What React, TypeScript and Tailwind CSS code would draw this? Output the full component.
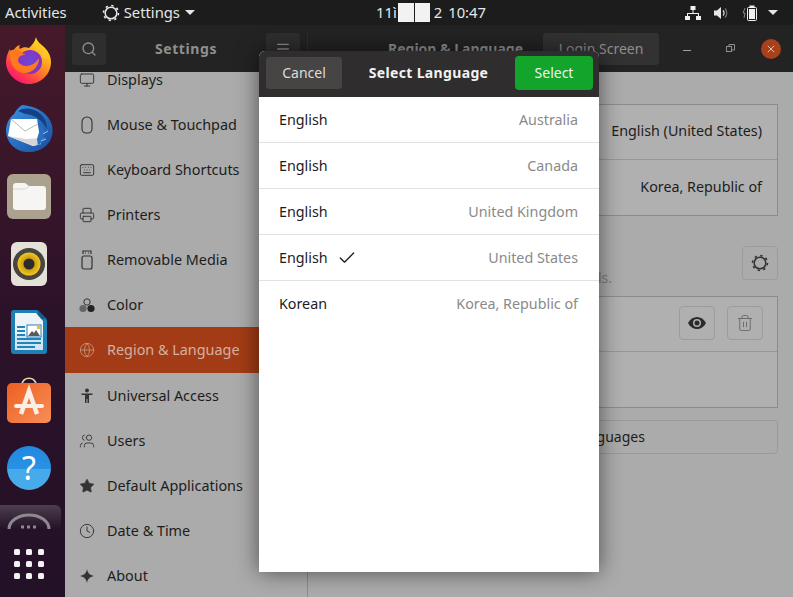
import { ReactNode } from "react";
import { Check, Trash2, Search, Menu, X, Monitor, Keyboard, Printer, Globe, Users, Star, Clock } from "lucide-react";

const FONT = "[font-family:'Noto_Sans','Open_Sans',sans-serif]";

const Cog = ({ size = 18, className = "" }: { size?: number; className?: string }) => (
    <svg width={size} height={size} viewBox="0 0 20 20" fill="none" stroke="currentColor" className={className}>
        <circle cx="10" cy="10" r="6.500" strokeWidth="1.700" />
        <circle cx="10" cy="10" r="8.300" strokeWidth="1.800" strokeDasharray="2.600 3.920" />
    </svg>
);

const Firefox = () => (
    <svg width="46" height="47" viewBox="0 0 46 47">
        <defs>
            <linearGradient id="ff1" x1="0.8" y1="0.1" x2="0.2" y2="0.95">
                <stop offset="0" stopColor="#ffe226" />
                <stop offset="0.45" stopColor="#ff8a1f" />
                <stop offset="0.8" stopColor="#ff3650" />
                <stop offset="1" stopColor="#f5157a" />
            </linearGradient>
            <radialGradient id="ff2" cx="0.5" cy="0.45" r="0.6">
                <stop offset="0" stopColor="#6a48d8" />
                <stop offset="1" stopColor="#8a2fc0" />
            </radialGradient>
        </defs>
        <path d="M30 0c1 5 5 7 9 11 4 4 6 9 6 14 0 12-10 22-22 22S0 37 0 25c0-5 2-10 4-13 0 2 1 4 2 5 1-4 4-8 8-9-1 2-1 3 0 4 3-2 6-2 9-1 3-3 6-6 7-11z" fill="url(#ff1)" />
        <circle cx="24" cy="25" r="12" fill="url(#ff2)" />
        <path d="M4 14c3-2 7-2 10 0 1 2 3 3 6 3-3 1-7 2-9 5 1 4 5 7 9 7 5 0 10-3 13-8 0 8-6 15-14 15-9 0-16-8-15-22z" fill="#ff7a1c" />
        <path d="M30 4c4 3 10 9 11 17-1 2-3 1-4-1-1-5-5-10-7-16z" fill="#ffc42a" />
    </svg>
);

const Thunderbird = () => (
    <svg width="48" height="48" viewBox="0 0 48 48">
        <defs>
            <linearGradient id="tb1" x1="0" y1="0" x2="1" y2="1">
                <stop offset="0" stopColor="#3a93e6" />
                <stop offset="1" stopColor="#1a4c9c" />
            </linearGradient>
        </defs>
        <path d="M17 1c-3 2-6 5-8 9C3 15 1 21 1 27c0 10 8 20 20 21 10 1 19-3 24-11 3-6 3-11 2-16C44 10 32 2 17 1z" fill="url(#tb1)" />
        <path d="M13 7c6-4 14-3 20 1 6 4 9 10 9 17-4-7-9-12-16-14-5-1-9-2-13-4z" fill="#133f84" />
        <path d="M6 15l26 0 4 25-8 2L3 32z" fill="#ffffff" />
        <path d="M6 15l14 12 13-7" fill="none" stroke="#b8b8b8" strokeWidth="1" />
        <path d="M3 32l25 10 8-2-1-6-14 1z" fill="#d6d6d6" />
        <path d="M36 22l4 6-2 4 3 2-8 8-1-7z" fill="#2a6fc0" />
        <path d="M38 30l5-3M36 37l5-2" stroke="#9fc6ee" strokeWidth="1" />
    </svg>
);

const Files = () => (
    <div className="flex h-[45px] w-[44px] items-center justify-center rounded-md bg-[#aaa28f]">
        <svg width="33" height="27" viewBox="0 0 33 27">
            <path d="M0 3a3 3 0 0 1 3-3h9l4 3h14a3 3 0 0 1 3 3v18a3 3 0 0 1-3 3H3a3 3 0 0 1-3-3z" fill="#f6f5f3" />
            <path d="M0 6h12l4-3" fill="none" stroke="#dcd8cf" strokeWidth="1" />
        </svg>
    </div>
);

const Rhythmbox = () => (
    <div className="flex h-[44px] w-[36px] items-center justify-center rounded-md bg-[#e4e1d9]">
        <svg width="32" height="32" viewBox="0 0 32 32">
            <defs>
                <radialGradient id="rb1" cx="0.5" cy="0.5" r="0.5">
                    <stop offset="0.45" stopColor="#c79a10" />
                    <stop offset="1" stopColor="#f4c61e" />
                </radialGradient>
            </defs>
            <circle cx="16" cy="16" r="16" fill="#46453f" />
            <circle cx="16" cy="16" r="11.500" fill="url(#rb1)" />
            <circle cx="16" cy="16" r="5.500" fill="#2b2b2b" />
        </svg>
    </div>
);

const Writer = () => (
    <svg width="36" height="44" viewBox="0 0 36 44">
        <path d="M3 0h23l10 10v31a3 3 0 0 1-3 3H3a3 3 0 0 1-3-3V3a3 3 0 0 1 3-3z" fill="#1f7fb5" />
        <path d="M27 0l9 9h-9z" fill="#0f5f92" />
        <path d="M4 3h21l7 8v29H4z" fill="#eef3f6" />
        <path d="M4 24h28v16H4z" fill="#d2e6f1" />
        <path d="M6 17h8M6 21h8M6 25h8M6 29h24M6 33h24M6 37h18" stroke="#1f84c0" strokeWidth="2" />
        <rect x="16" y="15" width="14" height="12" fill="#fff" stroke="#2a80b5" />
        <path d="M17 26l4-5 2 2 2-3 4 6z" fill="#5a5a5a" />
        <rect x="26" y="16" width="3" height="3" fill="#f0c030" />
    </svg>
);

const AppStore = () => (
    <svg width="44" height="46" viewBox="0 0 44 46">
        <defs>
            <linearGradient id="as1" x1="0" y1="0" x2="1" y2="1">
                <stop offset="0" stopColor="#ee5f20" />
                <stop offset="1" stopColor="#f78f58" />
            </linearGradient>
        </defs>
        <path d="M15 8c0-9 14-9 14 0" fill="none" stroke="#f4d3a8" strokeWidth="1.600" />
        <rect x="0" y="6" width="44" height="40" rx="5" fill="url(#as1)" />
        <path d="M14 37l8-23 8 23" fill="none" stroke="#fbeee6" strokeWidth="4.500" />
        <path d="M9 29h26" stroke="#fbeee6" strokeWidth="4" strokeLinecap="round" />
    </svg>
);

const Help = () => (
    <div className="flex h-[44px] w-[44px] items-center justify-center rounded-full bg-[linear-gradient(#2089e0_0%,#2a92e4_52%,#45a9ea_52%,#4aabea_100%)] text-[32px] leading-none text-white">
        ?
    </div>
);

const Apps = () => (
    <div className="grid grid-cols-3 gap-[6px]">
        {Array.from({ length: 9 }).map((_, i) => (
            <span key={i} className="h-[6px] w-[6px] rounded-[1.5px] bg-[#f2f2f2]" />
        ))}
    </div>
);

const Dock = () => (
    <div className="flex w-[65px] shrink-0 flex-col overflow-hidden bg-gradient-to-b from-[#47192a] via-[#2c1229] to-[#231127]">
        <div className="flex h-[480px] shrink-0 flex-col items-center pr-[7px] pt-[1px]">
            {[<Firefox />, <Thunderbird />, <Files />, <Rhythmbox />, <Writer />, <AppStore />, <Help />].map((icon, i) => (
                <div key={i} className="flex h-[68px] shrink-0 items-center justify-center">{icon}</div>
            ))}
        </div>
        <div className="h-[24px] w-[61px] shrink-0 overflow-hidden rounded-tr-md bg-gradient-to-b from-[#4d3e4f] to-[#241328]">
            <svg width="61" height="24" viewBox="0 0 61 24" fill="none" stroke="#8e8890">
                <path d="M9 24a20 14 0 0 1 40 0" strokeWidth="3" />
                <path d="M21 22h16" strokeWidth="3" strokeDasharray="3 3" />
            </svg>
        </div>
        <div className="flex flex-1 items-start justify-center pr-[7px] pt-[20px]">
            <Apps />
        </div>
    </div>
);

type Item = { label: string; icon: ReactNode; active?: boolean };

const MouseIcon = () => (
    <svg width="16" height="18" viewBox="0 0 16 18" fill="none" stroke="currentColor" strokeWidth="1.100">
        <path d="M3 6a5 5 0 0 1 10 0v7a4 4 0 0 1-4 4H7a4 4 0 0 1-4-4z" />
    </svg>
);

const Usb = () => (
    <svg width="16" height="20" viewBox="0 0 16 20" fill="none" stroke="currentColor" strokeWidth="1.200">
        <rect x="3" y="6" width="10" height="13" rx="2" />
        <path d="M4 4V1h8v3M6 3h1M9 3h1" />
    </svg>
);

const ColorDots = () => (
    <svg width="16" height="16" viewBox="0 0 16 16">
        <circle cx="8" cy="5" r="3.200" fill="none" stroke="#333" strokeWidth="1" />
        <circle cx="4" cy="11.500" r="3.600" fill="#666" />
        <circle cx="12" cy="11.500" r="3.600" fill="#222" />
    </svg>
);

const Person = () => (
    <svg width="16" height="16" viewBox="0 0 16 16" fill="#333">
        <circle cx="8" cy="2.500" r="2" />
        <path d="M2.500 5.500h11v1.600H10V15H8.500v-4h-1v4H6V7.100H2.500z" />
    </svg>
);

const Spark = () => (
    <svg width="16" height="16" viewBox="0 0 16 16">
        <path d="M8 1c.8 4 2.500 6 7 7-4.500 1-6.200 3-7 7-.8-4-2.500-6-7-7 4.500-1 6.200-3 7-7z" fill="#333" />
    </svg>
);

const items: Item[] = [
    { label: "Displays", icon: <Monitor size={16} strokeWidth={1.4} /> },
    { label: "Mouse & Touchpad", icon: <MouseIcon /> },
    { label: "Keyboard Shortcuts", icon: <Keyboard size={16} strokeWidth={1.4} /> },
    { label: "Printers", icon: <Printer size={16} strokeWidth={1.4} /> },
    { label: "Removable Media", icon: <Usb /> },
    { label: "Color", icon: <ColorDots /> },
    { label: "Region & Language", icon: <Globe size={16} strokeWidth={1.2} />, active: true },
    { label: "Universal Access", icon: <Person /> },
    { label: "Users", icon: <Users size={16} strokeWidth={1.3} className="-scale-x-100" /> },
    { label: "Default Applications", icon: <Star size={16} fill="#333" strokeWidth={1} /> },
    { label: "Date & Time", icon: <Clock size={16} strokeWidth={1.4} /> },
    { label: "About", icon: <Spark /> },
];

const Sidebar = () => (
    <div className="w-[243px] shrink-0 overflow-hidden border-r border-[#8d8d8d] bg-[#ababab]">
        <div className="-mt-[15px]">
            {items.map((item) => (
                <div
                    key={item.label}
                    className={`flex items-center pl-[14px] text-[14.4px] ${item.active ? "h-[46px] bg-[#a33c16] text-[#d3b1a2]" : "h-[45px] text-[#1d1d1d]"}`}
                >
                    <span className={`flex w-[28px] justify-start ${item.active ? "text-[#c99a86]" : "text-[#333]"}`}>{item.icon}</span>
                    {item.label}
                </div>
            ))}
        </div>
    </div>
);

const Panel = ({ children }: { children: ReactNode }) => (
    <div className="flex flex-col divide-y divide-[#979797] border border-[#8b8b8b] bg-[#b0b0b0]">{children}</div>
);

const Row = ({ label, value }: { label: string; value?: ReactNode }) => (
    <div className="flex h-[55px] items-center justify-between pb-[2px] pl-[14px] pr-[15px] text-[14.3px] text-[#1d1d1d]">
        <span>{label}</span>
        {value}
    </div>
);

const IconButton = ({ children }: { children: ReactNode }) => (
    <div className="flex h-[34px] w-[36px] items-center justify-center rounded-[4px] border border-[#9c9c9c]">{children}</div>
);

const EyeIcon = () => (
    <svg width="18" height="12" viewBox="0 0 18 12">
        <path d="M0 6c2-4 5.500-6 9-6s7 2 9 6c-2 4-5.500 6-9 6s-7-2-9-6z" fill="#2a2a2a" />
        <circle cx="9" cy="6" r="4" fill="#b0b0b0" />
        <circle cx="9" cy="6" r="2.500" fill="#2a2a2a" />
    </svg>
);

const Content = () => (
    <div className="flex min-w-0 flex-1 flex-col bg-[#ababab] pl-[14px] pr-[15px] pt-[32px]">
        <Panel>
            <Row label="Language" value={<span>English (United States)</span>} />
            <Row label="Formats" value={<span>Korea, Republic of</span>} />
        </Panel>
        <div className="mt-[30px] flex items-start justify-between">
            <div className="w-[290px] text-right text-[14px] leading-[20px] text-[#7d7d7d]">
                <div className="text-left font-bold text-[#1d1d1d]">Input Sources</div>
                <div className="mt-[2px] whitespace-nowrap">Choose keyboard layouts or input methods.</div>
            </div>
            <IconButton><Cog size={18} className="text-[#333]" /></IconButton>
        </div>
        <div className="mt-[8px]">
            <Panel>
                <Row
                    label="Korean"
                    value={
                        <div className="-mr-[1px] flex gap-[12px]">
                            <IconButton><EyeIcon /></IconButton>
                            <IconButton><Trash2 size={18} strokeWidth={1.2} className="text-[#666]" /></IconButton>
                        </div>
                    }
                />
                <Row label="English (US)" />
            </Panel>
        </div>
        <div className="mt-[12px] flex h-[34px] items-center justify-center rounded-[4px] border border-[#999] pb-[2px] text-[14px] text-[#1d1d1d]">
            Manage Installed Languages
        </div>
    </div>
);

const HeaderBar = () => (
    <div className="flex h-[47px] shrink-0 items-center bg-[#232323] text-[#8f8f8f]">
        <div className="flex w-[243px] shrink-0 items-center justify-between border-r border-[#2e2e2e] px-[7px]">
            <div className="flex h-[32px] w-[34px] items-center justify-center rounded-[3px] bg-[#2e2e2e]">
                <Search size={16} />
            </div>
            <span className="text-[14px] font-bold tracking-[0.6px]">Settings</span>
            <div className="flex h-[32px] w-[34px] items-center justify-center rounded-[3px] bg-[#2e2e2e]">
                <Menu size={16} />
            </div>
        </div>
        <div className="flex flex-1 items-center pl-[80px] pr-[13px]">
            <span className="w-[155px] shrink-0 whitespace-nowrap text-[14px] font-bold">Region &amp; Language</span>
            <div className="flex h-[32px] w-[116px] items-center justify-center rounded-[3px] bg-[#333232] text-[14px]">Login Screen</div>
            <span className="ml-[24px] mt-[4px] h-[1px] w-[8px] bg-[#a0a0a0]" />
            <svg width="9" height="9" viewBox="0 0 9 9" fill="none" stroke="currentColor" className="ml-[35px]">
                <rect x="0.500" y="2.500" width="5" height="5" />
                <path d="M3 2V0.500h5.500V6H6" />
            </svg>
            <div className="ml-[26px] flex h-[20px] w-[20px] items-center justify-center rounded-full bg-[#a8401b] text-[#d9c2b8]">
                <X size={12} />
            </div>
        </div>
    </div>
);

const TopBar = () => (
    <div className="flex h-[25px] shrink-0 items-center bg-[#1c1c1c] text-[14.8px] text-[#e6e6e6]">
        <span className="pl-[5px]">Activities</span>
        <Cog size={18} className="ml-[35px]" />
        <span className="ml-[4px]">Settings</span>
        <span className="ml-[5px] h-0 w-0 border-x-[5px] border-t-[5px] border-x-transparent border-t-[#e6e6e6]" />
        <div className="ml-[181px] flex items-center">
            11ì
            <span className="ml-[1px] h-[19px] w-[16px] bg-[#f2f2f2]" />
            <span className="ml-[1px] h-[19px] w-[15px] bg-[#f2f2f2]" />
            <span className="ml-[4px]">2</span>
            <span className="ml-[6px]">10:47</span>
        </div>
        <div className="ml-auto flex items-center pr-[15px]">
            <svg width="16" height="14" viewBox="0 0 16 14" fill="#f0f0f0">
                <rect x="5.500" y="0" width="5" height="4" />
                <rect x="0" y="10" width="5" height="4" />
                <rect x="11" y="10" width="5" height="4" />
                <path d="M7.500 4h1v3h5.500v3h-1V8H3v2H2V7h5.500z" />
            </svg>
            <svg width="15" height="14" viewBox="0 0 15 14" fill="none" className="ml-[13px]">
                <path d="M0 4.500h3L7 1v12L3 9.500H0z" fill="#e6e6e6" />
                <path d="M9 4.500a3.500 3.500 0 0 1 0 5" stroke="#e6e6e6" strokeWidth="1.200" />
                <path d="M11 2.500a6.500 6.500 0 0 1 0 9" stroke="#777" strokeWidth="1.200" />
            </svg>
            <svg width="15" height="16" viewBox="0 0 15 16" fill="none" className="ml-[13px]">
                <path d="M3 3L1 8h2l-1 5" stroke="#888" />
                <rect x="5.500" y="2.500" width="9" height="13" rx="1" stroke="#f0f0f0" />
                <rect x="7" y="4" width="6" height="10" fill="#f0f0f0" />
                <rect x="7.500" y="0.500" width="5" height="2" fill="#f0f0f0" />
            </svg>
            <span className="ml-[11px] h-0 w-0 border-x-[5px] border-t-[5px] border-x-transparent border-t-[#e6e6e6]" />
        </div>
    </div>
);

const languages = [
    { name: "English", region: "Australia" },
    { name: "English", region: "Canada" },
    { name: "English", region: "United Kingdom" },
    { name: "English", region: "United States", checked: true },
    { name: "Korean", region: "Korea, Republic of" },
];

const LanguageDialog = () => (
    <div className="absolute left-[259px] top-[51px] flex h-[521px] w-[340px] flex-col overflow-hidden rounded-t-[6px] bg-white shadow-[0_0_22px_rgba(0,0,0,0.55)]">
        <div className="flex h-[46px] shrink-0 items-center justify-between bg-[#2f2d2d] pb-[2px] pl-[7px] pr-[6px]">
            <div className="flex h-[32px] w-[76px] items-center justify-center rounded-[3px] bg-[#474543] pb-[1px] text-[14px] text-[#dcdcdc]">Cancel</div>
            <span className="pb-[1px] text-[14px] font-bold tracking-[0.35px] text-[#f2f2f2]">Select Language</span>
            <div className="flex h-[34px] w-[78px] items-center justify-center rounded-[4px] bg-[#12a42b] pb-[1px] text-[14px] text-[#f2f2f2]">Select</div>
        </div>
        {languages.map((lang, i) => (
            <div
                key={lang.region}
                className={`flex h-[46px] shrink-0 items-center justify-between pl-[20px] pr-[21px] text-[14.3px] ${i < languages.length - 1 ? "border-b border-[#e2e2e2]" : ""}`}
            >
                <span className="flex items-center text-[#1c1c1c]">
                    {lang.name}
                    {lang.checked && <Check size={20} strokeWidth={1.6} className="ml-[9px]" />}
                </span>
                <span className="text-[#8a8a8a]">{lang.region}</span>
            </div>
        ))}
    </div>
);

const App = () => (
    <div className={`relative flex h-[597px] w-[793px] flex-col overflow-hidden ${FONT}`}>
        <TopBar />
        <div className="flex min-h-0 flex-1">
            <Dock />
            <div className="flex min-w-0 flex-1 flex-col">
                <HeaderBar />
                <div className="flex min-h-0 flex-1">
                    <Sidebar />
                    <Content />
                </div>
            </div>
        </div>
        <LanguageDialog />
    </div>
);

export default App;
